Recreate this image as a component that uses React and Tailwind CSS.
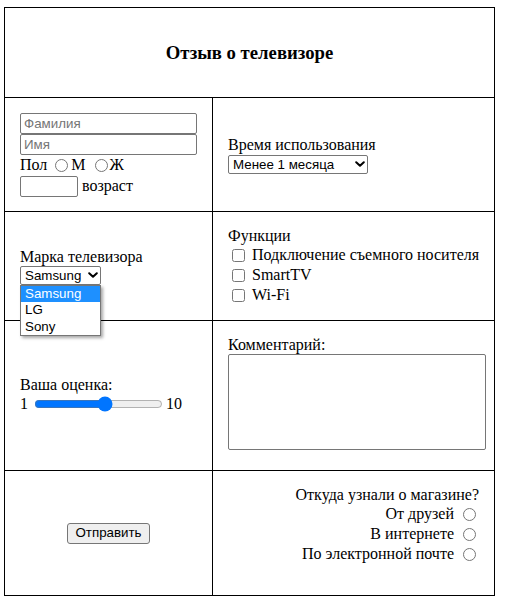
import React from "react";

const sans = "font-['Liberation_Sans',Arial,sans-serif] text-[13.33px]";
const field = `${sans} h-[21px] rounded-[2px] border border-[#767676] bg-white px-[3px] text-black placeholder:text-[#757575] outline-none`;
const check = "ml-[4px] mr-[7px]";

function Chevron() {
  return (
    <svg
      width="10"
      height="6"
      viewBox="0 0 10 6"
      fill="none"
      className="pointer-events-none absolute right-[3px] top-[6px]"
    >
      <path d="M1.2 1.2L5 4.8L8.8 1.2" stroke="#000" strokeWidth="2" strokeLinecap="round" strokeLinejoin="round" />
    </svg>
  );
}

// select drawn as a closed box, optional open list under it
function FakeSelect({ options, width, open }) {
  return (
    <span className="relative block">
      <select
        defaultValue={options[0]}
        className={`${sans} block h-[19px] appearance-none rounded-[2px] border border-[#767676] bg-white pl-[4px] pr-[16px] leading-[17px] text-black outline-none ${width}`}
      >
        {options.map((o) => (
          <option key={o}>{o}</option>
        ))}
      </select>
      <Chevron />
      {open && (
        <div
          className={`${sans} absolute left-0 top-full z-10 border border-[#767676] bg-white shadow-[2px_2px_3px_rgba(0,0,0,0.35)] ${width}`}
        >
          {options.map((o, i) => (
            <div
              key={o}
              className={`h-[16.67px] pl-[4px] leading-[16px] ${
                i === 0 ? "bg-[#1e90ff] text-white" : "text-black"
              }`}
            >
              {o}
            </div>
          ))}
        </div>
      )}
    </span>
  );
}

function RadioRow({ label }) {
  return (
    <div className="flex h-[20px] items-center justify-end">
      {label}
      <input type="radio" name="src" className="ml-[9px] mr-[3px]" />
    </div>
  );
}

function CheckRow({ label }) {
  return (
    <div className="flex h-[20px] items-center whitespace-nowrap">
      <input type="checkbox" className={check} />
      {label}
    </div>
  );
}

export default function App() {
  return (
    <div className="min-h-screen bg-white pl-[4px] pt-[7px] font-['Liberation_Serif','Times_New_Roman',serif] text-[16px] leading-[18px] text-black">
      <div className="grid w-[491px] grid-cols-[208px_282px] border-l border-t border-black">
        {/* HEADER */}
        <div className="col-span-2 flex h-[90px] items-center justify-center border-b border-r border-black">
          <h3 className="text-[18.72px] font-bold leading-[22px]">Отзыв о телевизоре</h3>
        </div>

        {/* NAME / SEX / AGE */}
        <div className="flex h-[114px] flex-col justify-center border-b border-r border-black px-[15px]">
          <input type="text" placeholder="Фамилия" className={`${field} block w-[177px]`} />
          <input type="text" placeholder="Имя" className={`${field} block w-[177px]`} />
          <div className="flex h-[21px] items-center">
            Пол
            <input type="radio" name="sex" className="ml-[8px] mr-[3px]" />
            М
            <input type="radio" name="sex" className="ml-[9px] mr-[2px]" />
            Ж
          </div>
          <div className="flex h-[21px] items-center">
            <input type="text" className={`${field} w-[58px]`} />
            <span className="ml-[4px]">возраст</span>
          </div>
        </div>
        <div className="flex h-[114px] flex-col justify-center border-b border-r border-black px-[15px]">
          <div className="h-[19px]">Время использования</div>
          <div className="flex">
            <FakeSelect options={["Менее 1 месяца"]} width="w-[140px]" />
          </div>
        </div>

        {/* BRAND / FUNCTIONS */}
        <div className="flex h-[109px] flex-col justify-center border-b border-r border-black px-[15px]">
          <div>Марка телевизора</div>
          <div className="flex">
            <FakeSelect options={["Samsung", "LG", "Sony"]} width="w-[81px]" open />
          </div>
        </div>
        <div className="flex h-[109px] flex-col justify-center border-b border-r border-black px-[15px]">
          <div>Функции</div>
          <CheckRow label="Подключение съемного носителя" />
          <CheckRow label="SmartTV" />
          <CheckRow label="Wi-Fi" />
        </div>

        {/* RATING / COMMENT */}
        <div className="flex h-[150px] flex-col justify-center border-b border-r border-black px-[15px]">
          <div>Ваша оценка:</div>
          <div className="flex h-[20px] items-center">
            1
            <input type="range" min="1" max="10" defaultValue="6" className="ml-[6px] mr-[3px] w-[129px]" />
            10
          </div>
          <div className="h-[2px]" />
        </div>
        <div className="flex h-[150px] flex-col justify-center border-b border-r border-black px-[15px]">
          <div>Комментарий:</div>
          <textarea
            className={`${sans} block h-[96px] w-[258px] resize-none rounded-[2px] border border-[#767676] bg-white outline-none`}
          />
          <div className="h-[5px]" />
        </div>

        {/* SUBMIT / SOURCE */}
        <div className="flex h-[125px] items-center justify-center border-b border-r border-black">
          <button
            type="button"
            className={`${sans} h-[21px] w-[83px] rounded-[3px] border border-[#767676] bg-[#efefef] text-black`}
          >
            Отправить
          </button>
        </div>
        <div className="flex h-[125px] flex-col items-end border-b border-r border-black px-[15px] pt-[14px] text-right">
          <div className="h-[19px] leading-[19px]">Откуда узнали о магазине?</div>
          <RadioRow label="От друзей" />
          <RadioRow label="В интернете" />
          <RadioRow label="По электронной почте" />
        </div>
      </div>
    </div>
  );
}
